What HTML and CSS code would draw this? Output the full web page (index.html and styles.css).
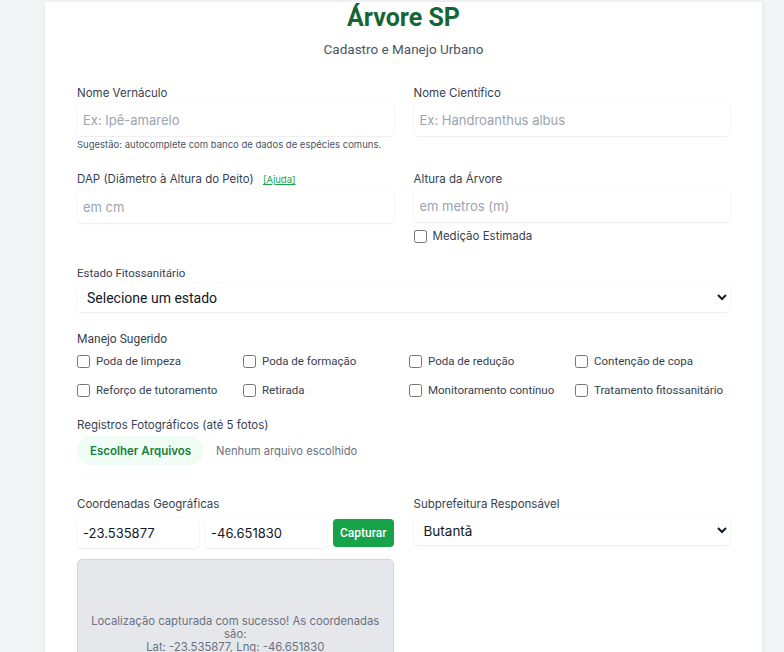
FILE: index.html
```html
<!DOCTYPE html>
<html lang="pt-BR">
<head>
  <meta charset="UTF-8">
  <meta name="viewport" content="width=device-width, initial-scale=1.0">
  <title>Árvore SP | Cadastro e Manejo Urbano</title>
  <link rel="stylesheet" href="styles.css">
</head>
<body>
  <main class="card">
    <h1>Árvore SP</h1>
    <p class="subtitle">Cadastro e Manejo Urbano</p>

    <form class="tree-form">
      <!-- Identificação da espécie -->
      <div class="grid-2">
        <div class="field">
          <label for="nomeVernaculo">Nome Vernáculo</label>
          <input type="text" id="nomeVernaculo" placeholder="Ex: Ipê-amarelo">
          <p class="hint">Sugestão: autocomplete com banco de dados de espécies comuns.</p>
        </div>
        <div class="field">
          <label for="nomeCientifico">Nome Científico</label>
          <input type="text" id="nomeCientifico" placeholder="Ex: Handroanthus albus">
        </div>
      </div>

      <!-- Medidas -->
      <div class="grid-2">
        <div class="field">
          <label for="dap">DAP (Diâmetro à Altura do Peito) <a href="#" class="help-link">[Ajuda]</a></label>
          <input type="text" id="dap" placeholder="em cm">
        </div>
        <div class="field">
          <label for="altura">Altura da Árvore</label>
          <input type="text" id="altura" placeholder="em metros (m)">
          <label class="check estimate"><input type="checkbox"> Medição Estimada</label>
        </div>
      </div>

      <div class="field">
        <label for="estado" class="label-alt">Estado Fitossanitário</label>
        <select id="estado" class="select-alt">
          <option>Selecione um estado</option>
          <option>Bom</option>
          <option>Regular</option>
          <option>Ruim</option>
        </select>
      </div>

      <!-- Manejo -->
      <div class="field">
        <span class="label-alt">Manejo Sugerido</span>
        <div class="check-grid">
          <label class="check"><input type="checkbox"> Poda de limpeza</label>
          <label class="check"><input type="checkbox"> Poda de formação</label>
          <label class="check"><input type="checkbox"> Poda de redução</label>
          <label class="check"><input type="checkbox"> Contenção de copa</label>
          <label class="check"><input type="checkbox"> Reforço de tutoramento</label>
          <label class="check"><input type="checkbox"> Retirada</label>
          <label class="check"><input type="checkbox"> Monitoramento contínuo</label>
          <label class="check"><input type="checkbox"> Tratamento fitossanitário</label>
        </div>
      </div>

      <div class="field">
        <span class="label">Registros Fotográficos (até 5 fotos)</span>
        <div class="file-row">
          <label for="fotos" class="file-btn">Escolher Arquivos</label>
          <span class="file-name">Nenhum arquivo escolhido</span>
          <input type="file" id="fotos" multiple accept="image/*" class="hidden">
        </div>
      </div>

      <!-- Localização -->
      <div class="grid-2 location">
        <div class="field">
          <span class="label">Coordenadas Geográficas</span>
          <div class="coords">
            <input type="text" id="lat" value="-23.535877">
            <input type="text" id="lng" value="-46.651830">
            <button type="button" class="capture">Capturar</button>
          </div>
          <div class="map-box">
            <p>Localização capturada com sucesso! As coordenadas são:<br>Lat: -23.535877, Lng: -46.651830</p>
          </div>
        </div>
        <div class="field">
          <label for="subprefeitura">Subprefeitura Responsável</label>
          <select id="subprefeitura">
            <option>Butantã</option>
            <option>Pinheiros</option>
            <option>Sé</option>
          </select>
        </div>
      </div>
    </form>
  </main>
</body>
</html>
```

FILE: styles.css
```css
/* Base */
* {
  box-sizing: border-box;
  margin: 0;
  padding: 0;
}
body {
  font-family: 'Inter', sans-serif;
  background-color: #f3f4f6;
  color: #1f2937;
  padding-top: 2px;
}
/* Carte principale */
.card {
  background-color: #fff;
  width: 717px;
  margin-left: 45px;
  padding: 0 32px 40px;
  box-shadow: 0 0 6px rgba(0,0,0,0.06);
  min-height: 700px;
}
h1 {
  font-family: 'Roboto', sans-serif;
  font-size: 25px;
  line-height: 32px;
  font-weight: 700;
  color: #166534;
  text-align: center;
}
.subtitle {
  font-family: 'Roboto', sans-serif;
  font-size: 13.5px;
  line-height: 18px;
  color: #4b5563;
  text-align: center;
  margin-top: 6px;
}
.tree-form {
  display: flex;
  flex-direction: column;
  gap: 19px;
  margin-top: 27px;
}
.grid-2 {
  display: grid;
  grid-template-columns: 1fr 1fr;
  gap: 20px;
  align-items: start;
}
.field {
  display: flex;
  flex-direction: column;
}
.field > label,
.label,
.label-alt {
  font-size: 11.5px;
  line-height: 16px;
  color: #374151;
  margin-bottom: 2px;
}
.label-alt {
  font-family: 'Roboto', sans-serif;
  font-size: 12px;
}
.help-link {
  font-size: 9.5px;
  color: #16a34a;
  margin-left: 6px;
}
input[type="text"],
select {
  font-family: 'Inter', sans-serif;
  font-size: 13px;
  color: #111827;
  height: 33px;
  padding: 0 6px;
  border: none;
  border-radius: 4px;
  background-color: #fff;
  box-shadow: 0 1px 2px rgba(0,0,0,0.06), 0 0 0 1px rgba(0,0,0,0.02);
  outline: none;
  width: 100%;
}
input::placeholder {
  color: #9ca3af;
}
select {
  font-size: 13.5px;
  height: 29px;
  padding: 0 6px;
}
.select-alt {
  font-family: 'Roboto', sans-serif;
  font-size: 14px;
}
.hint {
  font-size: 9.5px;
  line-height: 14px;
  color: #4b5563;
  margin-top: 2px;
}
/* Cases à cocher */
.check {
  font-family: 'Roboto', sans-serif;
  font-size: 11.5px;
  line-height: 16px;
  color: #374151;
  display: flex;
  align-items: center;
  gap: 6px;
  white-space: nowrap;
}
.check input {
  width: 13px;
  height: 13px;
  margin: 0;
  flex: none;
}
.estimate {
  font-family: 'Inter', sans-serif;
  font-size: 11.5px;
  margin-top: 6px;
}
.check-grid {
  display: grid;
  grid-template-columns: repeat(4, 1fr);
  column-gap: 11px;
  row-gap: 13px;
  margin-top: 4px;
}
/* Fichiers */
.file-row {
  display: flex;
  align-items: center;
  gap: 12px;
  margin-top: 1px;
}
.file-btn {
  background-color: #f0fdf4;
  color: #15803d;
  font-size: 11.5px;
  font-weight: 600;
  height: 29px;
  padding: 0 13px;
  border-radius: 9999px;
  display: flex;
  align-items: center;
  cursor: pointer;
}
.file-name {
  font-size: 11.2px;
  color: #6b7280;
}
.hidden {
  display: none;
}
/* Localisation */
.location {
  margin-top: 12px;
}
.coords {
  display: flex;
  align-items: center;
  gap: 6px;
  margin-top: 4px;
}
.coords input {
  height: 30px;
  flex: 1;
  min-width: 0;
}
.capture {
  background-color: #16a34a;
  color: #fff;
  font-family: 'Roboto', sans-serif;
  font-size: 12px;
  font-weight: 500;
  border: none;
  border-radius: 4px;
  height: 28px;
  padding: 0 7px;
  flex: none;
  cursor: pointer;
}
.location select {
  margin-top: 2px;
}
.map-box {
  margin-top: 11px;
  height: 150px;
  background-color: #e5e7eb;
  border: 1px solid #d1d5db;
  border-radius: 5px;
  display: flex;
  align-items: center;
  justify-content: center;
  text-align: center;
  padding: 0 4px;
}
.map-box p {
  font-size: 11.3px;
  line-height: 13px;
  color: #6b7280;
}
```
